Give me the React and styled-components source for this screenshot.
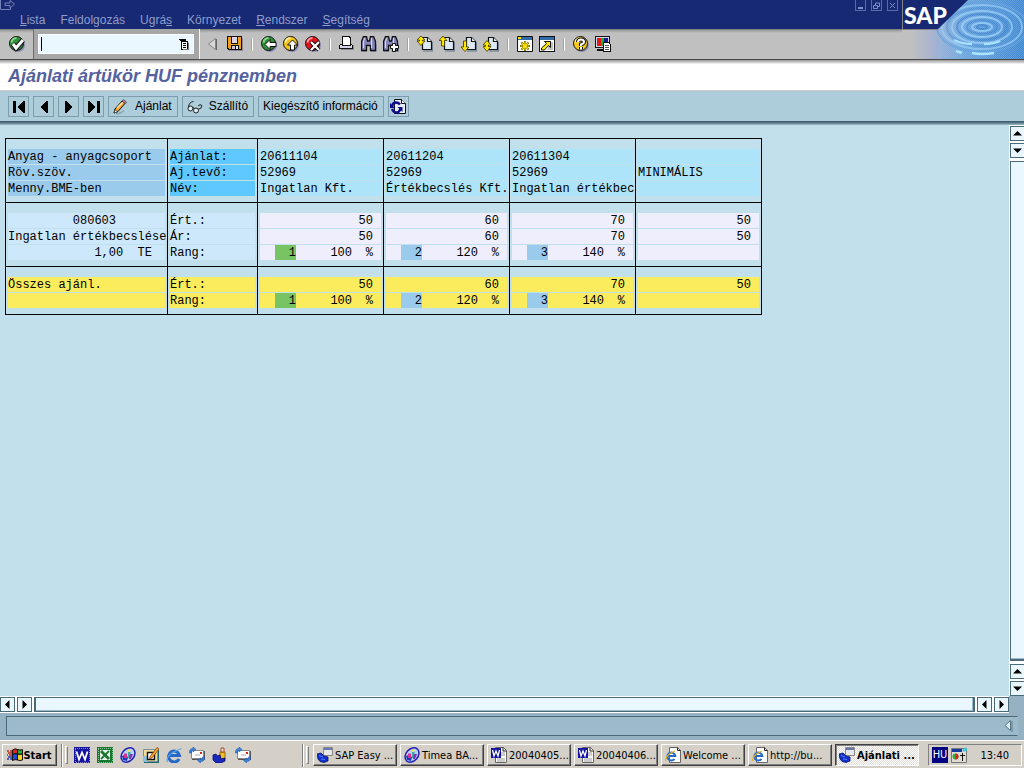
import React, { useState } from "react";
import styled, { createGlobalStyle, css } from "styled-components";

const GlobalStyle = createGlobalStyle`
  * {
    box-sizing: border-box;
  }
  body {
    margin: 0;
    font-family: "Liberation Sans", Arial, sans-serif;
    font-size: 12px;
    color: #000;
  }
  button {
    font: inherit;
    color: inherit;
    border: 0;
    padding: 0;
    background: none;
  }
  svg {
    display: block;
    flex-shrink: 0;
  }
`;

const Screen = styled.div`
  display: flex;
  flex-direction: column;
  min-height: 100vh;
  background: #c2dfec;
`;

/* header */

const Header = styled.header`
  display: grid;
  grid-template-columns: 1fr 122px;
  border-bottom: 1px solid #484848;
  background: #c0c0c0;
`;

const TopBar = styled.div`
  height: 29px;
  background: #172973;
  color: #8f9dcb;
`;

const TitleStrip = styled.div`
  display: flex;
  justify-content: space-between;
  height: 11px;
`;

const WindowButtons = styled.div`
  display: flex;
  gap: 5px;
  padding-right: 4px;
`;

const WindowButton = styled.button`
  width: 11px;
  height: 11px;
  border: 1px solid #5a6aa8;
  border-top: 0;
`;

const Menu = styled.nav`
  display: flex;
  gap: 15px;
  padding-left: 20px;
`;

const MenuItem = styled.button`
  line-height: 18px;
`;

const Toolbar = styled.div`
  display: flex;
  align-items: center;
  height: 30px;
  padding-left: 9px;
  background: linear-gradient(#777 0, #aaa 2px, #c0c0c0 4px, #c0c0c0 100%);
`;

const IconButton = styled.button`
  width: 16px;
  height: 16px;
`;

const CommandBox = styled.div`
  display: flex;
  align-items: center;
  height: 30px;
  margin-left: 8px;
  padding: 0 5px 0 4px;
  background: #a6a6a6;
  border-left: 1px solid #6c6c6c;
  border-right: 1px solid #f4f4f4;
`;

const CommandField = styled.div`
  display: flex;
  align-items: center;
  width: 156px;
  height: 20px;
  padding-right: 3px;
  background: #ebf7ff;
  border: 1px solid #fff;
`;

const CommandInput = styled.input`
  flex: 1;
  min-width: 0;
  height: 14px;
  margin-left: 2px;
  padding: 0 2px;
  font: inherit;
  background: transparent;
  border: 0;
  border-left: 1px solid #000;
  outline: none;
`;

const ToolGroup = styled.div`
  display: flex;
  align-items: center;
  gap: 6px;
  padding-left: 5px;
`;

const Separator = styled.span`
  width: 2px;
  height: 13px;
  margin: 0 2px;
  border-left: 1px solid #a2a2a2;
  border-right: 1px solid #fff;
`;

const LogoPanel = styled.div`
  grid-column: 2;
  grid-row: 1 / span 2;
`;

const TitleBar = styled.div`
  height: 31px;
  padding: 4px 8px 0;
  background: linear-gradient(#9a9a9a 0, #dcdcdc 3px, #fff 4px, #fff 100%);
  border-bottom: 1px solid #c9c9c9;
`;

const Title = styled.h1`
  margin: 0;
  font-size: 18px;
  line-height: 24px;
  font-style: italic;
  font-weight: bold;
  color: #5462a0;
`;

const AppBar = styled.div`
  display: flex;
  align-items: center;
  gap: 4px;
  height: 34px;
  padding: 0 8px 3px;
  background: linear-gradient(
    #adcddb 0,
    #adcddb 30px,
    #34515f 30px,
    #5f7f8e 32px,
    #9fbccb 34px
  );
`;

const AppButton = styled.button`
  display: flex;
  align-items: center;
  justify-content: center;
  gap: 6px;
  min-width: 21px;
  height: 21px;
  padding: 0 ${(p) => (p.$label ? "5px 0 4px" : "0")};
  border: 1px solid #7d9dac;
  line-height: 19px;
`;

/* work area */

const Work = styled.main`
  display: grid;
  grid-template-columns: 1fr 15px;
  flex: 1;
`;

const ListArea = styled.div`
  padding: 13px 0 0 5px;
`;

const Offers = styled.table`
  border-collapse: collapse;
  font-family: "Liberation Mono", "Courier New", monospace;
  font-size: 12px;
  line-height: 17px;
  table-layout: fixed;
  width: 757px;

  td,
  th {
    padding: 10px 2px 5px;
    border: 1px solid #000;
    font-weight: normal;
    text-align: left;
    vertical-align: top;
  }
`;

const tones = {
  material: "#9acbec",
  caption: "#5fc9ff",
  bidder: "#aee4fa",
  item: "#cde8fb",
  value: "#eeeefc",
  total: "#faec5c",
};

const Line = styled.div`
  height: 15px;
  margin-bottom: 1px;
  padding-right: ${(p) => (p.$right ? "8px" : "0")};
  background: ${(p) => tones[p.$tone]};
  text-align: ${(p) => (p.$right ? "right" : "left")};
  white-space: pre;
`;

const RankLine = styled(Line)`
  display: grid;
  grid-template-columns: 15px 21px 56px 21px;
  text-align: right;
`;

const Rank = styled.span`
  grid-column: 2;
  height: 15px;
  background: ${(p) => (p.$best ? "#78c465" : "#9acbec")};
`;

const VScroll = styled.div`
  display: flex;
  flex-direction: column;
  gap: 2px;
  padding: 1px 0 0 1px;
  background: #fff;
`;

const HScroll = styled.div`
  display: flex;
  gap: 2px;
  height: 17px;
  margin-right: 15px;
  padding: 1px 0;
  background: #fff;
`;

const ScrollButton = styled.button`
  display: flex;
  align-items: center;
  justify-content: center;
  width: 15px;
  height: 15px;
  background: #ebf7ff;
  border: 1px solid #4a6979;
  flex-shrink: 0;
`;

const Thumb = styled.div`
  flex: 1;
  background: #ebf7ff;
  border: 1px solid #4a6979;
  ${(p) =>
    p.$vertical
      ? css`
          border-bottom-width: 2px;
          margin: 1px 0;
          width: 15px;
          box-shadow: inset 0 -1px #9cbac9;
        `
      : css`
          border-left-width: 2px;
          border-right-width: 2px;
          box-shadow: inset -1px -1px #9cbac9;
        `}
`;

const ScrollRow = styled.div`
  background: #95b1c2;
`;

const StatusBar = styled.footer`
  height: 27px;
  padding: 3px 6px 4px;
  background: #95b1c2;
`;

const StatusField = styled.div`
  display: flex;
  align-items: center;
  justify-content: flex-end;
  height: 20px;
  padding-right: 4px;
  background: #9cbaca;
  border: 1px solid #49697a;
  border-right-color: #9cbaca;
`;

/* taskbar */

const Taskbar = styled.div`
  display: flex;
  align-items: center;
  height: 28px;
  padding: 1px 2px 0;
  background: #d4d0c8;
  border-top: 1px solid #fff;
  font-family: "DejaVu Sans Condensed", Tahoma, sans-serif;
  font-size: 11px;
`;

const raised = css`
  border: 1px solid;
  border-color: #fff #404040 #404040 #fff;
  box-shadow: inset -1px -1px #808080;
`;

const StartButton = styled.button`
  ${raised}
  display: flex;
  align-items: center;
  justify-content: center;
  width: 55px;
  height: 22px;
  font-weight: bold;
`;

const Divider = styled.span`
  width: 2px;
  height: 23px;
  margin-left: ${(p) => (p.$wide ? "51px" : "4px")};
  border-left: 1px solid #808080;
  border-right: 1px solid #fff;
`;

const Grip = styled.span`
  width: 3px;
  height: 18px;
  margin-left: 2px;
  border: 1px solid;
  border-color: #fff #808080 #808080 #fff;
`;

const QuickLaunch = styled.div`
  display: flex;
  gap: 7px;
  padding-left: 6px;
`;

const Tasks = styled.div`
  display: flex;
  flex: 1;
  gap: 3px;
  padding: 0 9px 0 4px;
  min-width: 0;
`;

const Task = styled.button`
  ${raised}
  display: flex;
  align-items: center;
  flex: 1 1 0;
  gap: 2px;
  min-width: 0;
  height: 22px;
  padding-left: 3px;
  overflow: hidden;
  white-space: nowrap;
  ${(p) =>
    p.$active &&
    css`
      font-weight: bold;
      background: repeating-conic-gradient(#fff 0 25%, #dedbd5 0 50%) 0 0 / 2px
        2px;
      border-color: #404040 #fff #fff #404040;
      box-shadow: inset 1px 1px #808080;
    `}
`;

const Tray = styled.div`
  display: flex;
  align-items: center;
  gap: 3px;
  width: 94px;
  height: 22px;
  padding: 0 12px 0 3px;
  border: 1px solid;
  border-color: #808080 #fff #fff #808080;
`;

const Language = styled.span`
  width: 16px;
  height: 16px;
  background: #000080;
  color: #fff;
  line-height: 16px;
  text-align: center;
`;

const Clock = styled.time`
  margin-left: auto;
`;

/* icons */

const Icon = ({ children, size = 16, ...rest }) => (
  <svg
    width={size}
    height={size}
    viewBox={`0 0 ${size} ${size}`}
    fill="none"
    aria-hidden="true"
    {...rest}
  >
    {children}
  </svg>
);

const Disc = ({ fill, shine, children }) => (
  <Icon>
    <circle cx="9" cy="9" r="7" fill="#8a8ab8" />
    <circle cx="7.5" cy="7.5" r="7" fill={fill} stroke="#111" />
    <path d="M2.500 6.500a5 5 0 0 1 5-4.500" stroke={shine} strokeWidth="2" />
    {children}
  </Icon>
);

const EnterIcon = () => (
  <Disc fill="#2f8f38" shine="#8cd88c">
    <path d="M4 8l3 4 7-8" stroke="#111" strokeWidth="5" />
    <path d="M4 8l3 4 7-8" stroke="#fff" strokeWidth="3" />
  </Disc>
);

const BackIcon = () => (
  <Disc fill="#2f8f38" shine="#8cd88c">
    <path d="M4 8.500l5-5v3h6v4H9v3z" fill="#fff" stroke="#111" />
  </Disc>
);

const ExitIcon = () => (
  <Disc fill="#f2c417" shine="#fff3a0">
    <path d="M9.500 4l5 5h-3v5h-4V9h-3z" fill="#fff" stroke="#111" />
  </Disc>
);

const CancelIcon = () => (
  <Disc fill="#e3121c" shine="#ff9c9c">
    <path d="M6 6l8 8M14 6l-8 8" stroke="#111" strokeWidth="4" />
    <path d="M6 6l8 8M14 6l-8 8" stroke="#fff" strokeWidth="2.200" />
  </Disc>
);

const ListIcon = () => (
  <Icon size={11} shapeRendering="crispEdges">
    <path d="M2 2h7v9H2z" fill="#000" />
    <path d="M3 3h5v7H3z" fill="#fff" />
    <path d="M0 0h7v2H4v1H2V2H1V1H0z" fill="#000" />
    <path d="M4 4h3v1H4zM4 6h3v1H4zM4 8h3v1H4z" fill="#000" />
    <path d="M9 4h1v7H4v-1h5z" fill="#777" />
  </Icon>
);

const LeftTriangle = () => (
  <Icon>
    <path d="M10.500 2.500v11L3.500 8z" fill="#d8d8d8" stroke="#858585" />
    <path d="M11.500 3v11" stroke="#666" />
  </Icon>
);

const SaveIcon = () => (
  <Icon shapeRendering="crispEdges">
    <path d="M2 2h14v13H2z" fill="#8a8a9a" />
    <path d="M0 0h15v14H1L0 13z" fill="#111" />
    <path d="M1 1h3v7h7V1h3v12h-2v-4H4v4H2L1 12z" fill="#f0a020" />
    <path d="M5 1h5v6H5z" fill="#dcd4ec" />
    <path d="M5 10h3v3H5z" fill="#c8c8d8" />
    <path d="M9 10h2v3H9z" fill="#f4f4fa" />
  </Icon>
);

const PrintIcon = () => (
  <Icon shapeRendering="crispEdges">
    <path d="M2 14h13V9h-1v4H2z" fill="#8a8a9a" />
    <path d="M3 0h8v1h1v7h1v1h1v4H0V9h1V8h2z" fill="#111" />
    <path d="M4 1h6v1h1v7H4z" fill="#fff" />
    <path d="M1 9h2v1h9V9h1v1H1z" fill="#e8e8f4" />
    <path d="M1 10h12v2H1z" fill="#d4d4e6" />
  </Icon>
);

const FindIcon = ({ more }) => (
  <Icon>
    <path d="M1 15.500h5M10 15.500h5.500V8" stroke="#9c9ca8" />
    <path
      d="M2.500 .5h3l1 4.500h2l1-4.500h3l2 5v9h-5v-5h-4v5h-5v-9z"
      fill="#8487b8"
      stroke="#111"
      strokeWidth="1.300"
    />
    <path d="M3.500 2L2.500 6v6M10.500 2v10" stroke="#d5d8f0" />
    {more && (
      <path
        d="M9.500 9.500v-2h3v2h3v3h-3v3h-3v-3h-2v-3z"
        fill="#fff"
        stroke="#111"
      />
    )}
  </Icon>
);

const pageArrows = {
  first: "M4 0l4 4H5.500v1H8L4 9.500 0 5h2.500V4H0z",
  prev: "M4 0l4 4.500H5.500V10h-3V4.500H0z",
  next: "M4 15.500l4-4.500H5.500V5h-3v6H0z",
  last: "M4 4.500l4 4.500H5.500v1.500H8L4 15.500 0 10.500h2.500V9H0z",
};

const PageIcon = ({ kind }) => (
  <Icon>
    <path d="M6 15h9.500V6" stroke="#7c8c9a" strokeWidth="1.500" />
    <path
      d="M5.500 13.500v-12h5l4 4v8z"
      fill="#dce9f4"
      stroke="#111"
      strokeWidth="1.200"
    />
    <path d="M10.500 1.500v4h4" fill="#fff" stroke="#111" strokeWidth="1.200" />
    <path
      d={pageArrows[kind]}
      fill="#ffe600"
      stroke="#3c3600"
      strokeWidth=".8"
    />
  </Icon>
);

const SessionIcon = () => (
  <Icon>
    <path d="M.5 .5h15v15H.5z" fill="#fff" stroke="#111" />
    <path d="M1 1h14v3H1z" fill="#336aa8" />
    <path d="M1 1h3v2H1z" fill="#ffe600" />
    <path
      d="M8 5v10M3 10h10M4.500 6.500l7 7M11.500 6.500l-7 7"
      stroke="#5c5200"
      strokeWidth="2"
    />
    <path
      d="M8 5.500v9M3.500 10h9M5 7l6 6M11 7l-6 6"
      stroke="#ffe600"
      strokeWidth="1.200"
    />
  </Icon>
);

const ShortcutIcon = () => (
  <Icon shapeRendering="crispEdges">
    <path d="M.5 .5h15v15H.5z" fill="#fff" stroke="#111" />
    <path d="M1 1h14v3H1z" fill="#336aa8" />
    <path d="M11 6h3v8H8z" fill="#c4c4c4" />
    <path
      d="M5.500 5.500h6v6l-2-2-4 4.500h-3v-2L7.500 7.500z"
      fill="#ffe600"
      stroke="#111"
      shapeRendering="auto"
    />
  </Icon>
);

const HelpIcon = () => (
  <Disc fill="#f6c81c" shine="#fff3a0">
    <path
      d="M5 6q0-2.500 3-2.500T11 6q0 1.500-3 2.500v1.500M8 11v2.500"
      stroke="#111"
      strokeWidth="4"
    />
    <path
      d="M5 6q0-2.500 3-2.500T11 6q0 1.500-3 2.500v1.500M8 11v2.500"
      stroke="#fff"
      strokeWidth="2"
    />
  </Disc>
);

const LayoutIcon = () => (
  <Icon shapeRendering="crispEdges">
    <path d="M.5 .5h14v11H.5z" fill="#d8d8e8" stroke="#111" />
    <path d="M2 2h4v8H2z" fill="#e01818" />
    <path d="M6 2h3v8H6z" fill="#18b030" />
    <path d="M9 2h4v8H9z" fill="#181890" />
    <path d="M2 13h7v2H2z" fill="#111" />
    <path d="M8.500 6.500h5l2 2v7h-7z" fill="#fff" stroke="#111" />
    <path d="M10 9h4M10 11h4M10 13h4" stroke="#555" />
  </Icon>
);

const NavIcon = ({ back, edge }) => (
  <Icon
    shapeRendering="crispEdges"
    style={{ transform: back ? "none" : "scaleX(-1)" }}
  >
    {edge && <path d="M2 2h3v12H2z" fill="#000" />}
    <path
      d={edge ? "M14 2v12h-1L6 8l7-6z" : "M12 2v12h-1L4 8l7-6z"}
      fill="#000"
    />
  </Icon>
);

const PencilIcon = () => (
  <Icon>
    <path d="M3 14.500q4 1 8-3" stroke="#8ba6b5" strokeWidth="1.500" />
    <path d="M1 14l1-4 7-8 3 2.500-7 8z" fill="#f3a235" stroke="#111" />
    <path d="M4 9l6-6" stroke="#ffe6a0" strokeWidth="1.500" />
    <path d="M1 14l1-3.500L4.500 13z" fill="#fff" stroke="#111" strokeWidth=".6" />
    <path
      d="M9 2l1.500-1.300 3 2.500L12 4.700z"
      fill="#e77c8f"
      stroke="#111"
      strokeWidth=".6"
    />
  </Icon>
);

const GlassesIcon = () => (
  <Icon stroke="#222">
    <circle cx="3.5" cy="9.500" r="2.500" fill="#dceaf2" />
    <circle cx="9" cy="11.500" r="2.500" fill="#dceaf2" />
    <path d="M5.500 9q2-1 2 1M1.500 8Q2 3 6.500 2.500M11 10.500q4-1 4-4-2-2-4 .5" />
  </Icon>
);

const RefreshIcon = () => (
  <Icon>
    <path d="M4.500 14.500V.5h7l4 4v10z" fill="#e8f0f6" stroke="#111" />
    <path d="M11.500 .5v4h4" fill="#fff" stroke="#111" />
    <path
      d="M10 5.500Q8.500 3.500 6 3.500 3 3.500 2 7M2 10q1.500 3.500 4.500 3.500 2.500 0 4-3.500"
      stroke="#0c0c8c"
      strokeWidth="2.400"
    />
    <path d="M0 4v5h5zM12.500 13V8h-5z" fill="#0c0c8c" />
  </Icon>
);

const CommandGlyph = () => (
  <svg width="16" height="11" viewBox="0 0 16 11" fill="none" aria-hidden="true">
    <path d="M.5 0v9.500h10V7M5 5.500h5V8l4.500-4L10 .5V3H5z" stroke="#7282b8" />
  </svg>
);

const rotations = { up: 0, right: 90, down: 180, left: 270 };

const ScrollArrow = ({ dir }) => (
  <Icon size={9}>
    <path
      d="M0 6.500h9L4.500 2z"
      fill="#000"
      transform={`rotate(${rotations[dir]} 4.500 4.500)`}
    />
  </Icon>
);

const WindowsIcon = () => (
  <Icon>
    <path
      d="M5.500 3q2.500-2 5-.5V7q-2.500-1-5 .5z"
      fill="#e02818"
      stroke="#111"
    />
    <path
      d="M10.500 2.500q2.500 1 5 0V7q-2.500 1-5 0z"
      fill="#28a838"
      stroke="#111"
    />
    <path
      d="M5.500 7.500q2.500-1.500 5-.5v6q-2.500-1-5 .5z"
      fill="#2848d8"
      stroke="#111"
    />
    <path
      d="M10.500 7q2.500 1 5 0v6q-2.500 1-5 0z"
      fill="#f8d820"
      stroke="#111"
    />
    <path d="M0 4h2M3 4h2M1 6h4M0 8h1M2 8h3" stroke="#c02818" strokeWidth="1.400" />
    <path d="M1 10h4M0 12h2M3 12h2" stroke="#2838a8" strokeWidth="1.400" />
  </Icon>
);

const WordMark = () => (
  <Icon>
    <path d="M0 0h16v16H0z" fill="#1414a0" />
    <path
      d="M1 1h14v14H1z"
      stroke="#8c8cd8"
      strokeDasharray="1 1"
      shapeRendering="crispEdges"
    />
    <path d="M2.500 4.500l2.500 8 3-7 3 7 2.500-8" stroke="#fff" strokeWidth="1.800" />
  </Icon>
);

const ExcelMark = () => (
  <Icon>
    <path d="M0 0h16v16H0z" fill="#187830" />
    <path
      d="M1 1h14v14H1z"
      stroke="#8cc49a"
      strokeDasharray="1 1"
      shapeRendering="crispEdges"
    />
    <path d="M3 3h10v10H3z" fill="#eef8ee" />
    <path d="M4 4l8 8" stroke="#187830" strokeWidth="2.800" />
    <path d="M12 4l-8 8" stroke="#187830" strokeWidth="1.800" />
  </Icon>
);

const LotusIcon = () => (
  <Icon>
    <ellipse
      cx="8"
      cy="8"
      rx="8"
      ry="6"
      transform="rotate(-48 8 8)"
      fill="#b8d4f4"
      stroke="#2020b8"
      strokeWidth="1.500"
    />
    <path d="M2 9q3-2 6 1l-1 4-4-1z" fill="#2038b8" />
    <path d="M4 6.500h3V11H4z" fill="#d83098" />
    <path d="M8 5h2.500v6H8z" fill="#38a8a0" />
    <path d="M10 7h3l-2 5H9z" fill="#8030b8" />
    <circle cx="9" cy="3.500" r="1.300" fill="#f8e040" />
  </Icon>
);

const NotepadIcon = () => (
  <Icon>
    <path d="M1 3h15v13H1z" fill="#206870" />
    <path d="M.5 2.500h14v12H.5z" fill="#f0dc9c" stroke="#7890a0" />
    <path d="M0 9h5v6H0z" fill="#88c0d8" />
    <path d="M4.500 5.500h7v7h-7z" fill="#fff" stroke="#111" strokeWidth="1.400" />
    <path
      d="M7 9.500L14 .5l2 1.500-7 9-2.500.5z"
      fill="#f0a828"
      stroke="#803818"
      strokeWidth=".7"
    />
  </Icon>
);

const ExplorerIcon = ({ page }) => (
  <Icon>
    {page && (
      <g>
        <path d="M4.500 15.500V.5h8l3 3v12z" fill="#fff" stroke="#666" />
        <path d="M12.500 .5v3h3" stroke="#222" />
      </g>
    )}
    <path
      d={page ? "M9.500 12a4 4 0 1 1 .8-3H3" : "M13 12a5.500 5.500 0 1 1 .5-3.500H4"}
      stroke="#2468c8"
      strokeWidth={page ? "2" : "3"}
    />
    <path
      d={page ? "M1 14Q-1 9 10 4" : "M1.500 15Q-1.500 8 15.500 1.500"}
      stroke={page ? "#e8b818" : "#58a8e8"}
      strokeWidth="1.300"
    />
  </Icon>
);

const MailIcon = () => (
  <Icon>
    <path d="M3 4h13v9H3z" fill="#555" />
    <path d="M2.500 3.500h12v8h-12z" fill="#fff" stroke="#888" />
    <path d="M11 5h2v2h-2z" fill="#d82020" />
    <path d="M6 8h5" stroke="#aaa" />
    <path
      d="M.5 6Q0 1.500 4 1.500V0l3 2.500L4 5V3.500Q2 3.500 2.500 6z"
      fill="#3888e0"
      stroke="#1848a0"
      strokeWidth=".5"
    />
    <path
      d="M15.500 10q.5 4.500-4 4.500V16l-3-2.500 3-2.500v1.500q2.500 0 2-2.500z"
      fill="#3888e0"
      stroke="#1848a0"
      strokeWidth=".5"
    />
  </Icon>
);

const CleanerIcon = () => (
  <Icon>
    <path d="M8 5h5v7H8z" fill="#f0c020" stroke="#805008" strokeWidth=".8" />
    <path d="M9 1h3v4H9z" fill="#e8e0c0" stroke="#a02818" strokeWidth=".8" />
    <path
      d="M1 8l3-1 1 2 3-1 1 4 4-1v3l-4 2H4l-3-3z"
      fill="#1828c0"
      stroke="#081060"
      strokeWidth=".8"
    />
  </Icon>
);

const SapTaskIcon = () => (
  <Icon>
    <path d="M6.500 .5h9v8h-9z" fill="#e8e8e8" stroke="#888" />
    <path d="M7 1h8v2H7z" fill="#6878b0" />
    <path
      d="M0 7l4-1 3 3 4 1v4l-4 1.500-4-1L1 12z"
      fill="#1030d0"
      stroke="#081060"
      strokeWidth=".8"
    />
    <path d="M2 8.500l4 1.500M4 12l4 .5" stroke="#5880f0" />
  </Icon>
);

const WordDocIcon = () => (
  <Icon>
    <path d="M4.500 15.500V.5h8l3 3v12z" fill="#fff" stroke="#666" />
    <path d="M12 .5v3.500h3.500" stroke="#222" />
    <path d="M10 6h4M10 8h4M6 12h8M6 14h8" stroke="#999" />
    <path d="M0 1h10v10H0z" fill="#1414a0" />
    <path d="M1.500 3l1.500 6 2-5 2 5 1.500-6" stroke="#fff" strokeWidth="1.300" />
  </Icon>
);

const TrayIcon = () => (
  <Icon>
    <path d="M.5 1.500h15v14H.5z" fill="#e0dcd4" stroke="#777" />
    <path d="M1 2h10v3H1z" fill="#1838a0" />
    <path d="M11 3l4-3 1 3-3 2z" fill="#38d0e0" />
    <circle cx="4.500" cy="9.500" r="3" fill="#28b038" />
    <path d="M4.500 9.500V6.500a3 3 0 0 1 0 6z" fill="#e02020" />
    <path d="M11.500 6v8M9 8.500h5" stroke="#111" />
  </Icon>
);

const ripples = [
  [5, 2, "#2f76c4"],
  [10, 4, "#9ed8ff"],
  [15, 7, "#3d84d0"],
  [20, 10, "#a4dcff"],
  [25, 13, "#3b80cc"],
  [30, 16, "#9cd6fc"],
  [35, 19, "#4b90d6"],
  [40, 22, "#98d0f8"],
  [45, 25, "#5c9edc"],
];

const Logo = () => (
  <svg width="122" height="59" viewBox="0 0 122 59" role="img" aria-label="SAP">
    <defs>
      <linearGradient id="water">
        <stop offset="0.08" stopColor="#c0c0c0" />
        <stop offset="0.24" stopColor="#abb4d0" />
        <stop offset="0.5" stopColor="#6fa6dc" />
        <stop offset="1" stopColor="#3f86cf" />
      </linearGradient>
      <pattern id="grain" width="2" height="2" patternUnits="userSpaceOnUse">
        <path d="M0 0h1v1H0zM1 1h1v1H1z" fill="#9cc8f4" />
      </pattern>
    </defs>
    <rect width="122" height="59" fill="url(#water)" />
    <g fill="none">
      {ripples.map(([rx, ry, color]) => (
        <ellipse
          key={rx}
          cx="80"
          cy="27"
          rx={rx}
          ry={ry}
          stroke={color}
          strokeWidth="2"
          opacity="0.7"
        />
      ))}
      <path
        d="M52 40q8 4 18 4M82 44q10 0 16-3M54 51l6 2M70 53q10 2 22 0"
        stroke="#aee8ff"
        strokeWidth="2.500"
      />
    </g>
    <rect x="36" width="86" height="59" fill="url(#grain)" opacity="0.3" />
    <path d="M0 0h66L36 29H0z" fill="#172973" />
    <path d="M.5 0v29.500H36" fill="none" stroke="#858585" />
    <text
      x="2"
      y="24"
      fill="#fff"
      fontFamily="Lato, sans-serif"
      fontWeight="900"
      fontSize="23"
    >
      SAP
    </text>
  </svg>
);

const columns = [162, 90, 126, 126, 126, 126];

const bidders = [
  { id: "20611104", vendor: "52969", name: "Ingatlan Kft.", sum: "50", rank: 1, pct: "100" },
  { id: "20611204", vendor: "52969", name: "Értékbecslés Kft.", sum: "60", rank: 2, pct: "120" },
  { id: "20611304", vendor: "52969", name: "Ingatlan értékbec", sum: "70", rank: 3, pct: "140" },
];

const RankRow = ({ bidder, tone }) => (
  <RankLine $tone={tone}>
    <Rank $best={bidder.rank === 1}>{bidder.rank}</Rank>
    <span>{bidder.pct}</span>
    <span>%</span>
  </RankLine>
);

const Lines = ({ tone, right, items }) =>
  items.map((text, i) => (
    <Line key={i} $tone={tone} $right={right}>
      {text}
    </Line>
  ));

const OfferTable = () => (
  <Offers>
    <colgroup>
      {columns.map((width, i) => (
        <col key={i} width={width} />
      ))}
    </colgroup>
    <thead>
      <tr>
        <th>
          <Lines
            tone="material"
            items={["Anyag - anyagcsoport", "Röv.szöv.", "Menny.BME-ben"]}
          />
        </th>
        <th>
          <Lines tone="caption" items={["Ajánlat:", "Aj.tevő:", "Név:"]} />
        </th>
        {bidders.map((b) => (
          <th key={b.id}>
            <Lines tone="bidder" items={[b.id, b.vendor, b.name]} />
          </th>
        ))}
        <th>
          <Lines tone="bidder" items={["", "MINIMÁLIS", ""]} />
        </th>
      </tr>
    </thead>
    <tbody>
      <tr>
        <td>
          <Lines
            tone="item"
            items={["         080603", "Ingatlan értékbecslése", "            1,00  TE"]}
          />
        </td>
        <td>
          <Lines tone="item" items={["Ért.:", "Ár:", "Rang:"]} />
        </td>
        {bidders.map((b) => (
          <td key={b.id}>
            <Lines tone="value" right items={[b.sum, b.sum]} />
            <RankRow bidder={b} tone="value" />
          </td>
        ))}
        <td>
          <Lines tone="value" right items={["50", "50", ""]} />
        </td>
      </tr>
      <tr>
        <td>
          <Lines tone="total" items={["Összes ajánl.", ""]} />
        </td>
        <td>
          <Lines tone="total" items={["Ért.:", "Rang:"]} />
        </td>
        {bidders.map((b) => (
          <td key={b.id}>
            <Lines tone="total" right items={[b.sum]} />
            <RankRow bidder={b} tone="total" />
          </td>
        ))}
        <td>
          <Lines tone="total" right items={["50", ""]} />
        </td>
      </tr>
    </tbody>
  </Offers>
);

const toolGroups = [
  [
    ["Vissza", <LeftTriangle />],
    ["Mentés", <SaveIcon />],
  ],
  [
    ["Előző", <BackIcon />],
    ["Kilépés", <ExitIcon />],
    ["Mégse", <CancelIcon />],
  ],
  [
    ["Nyomtatás", <PrintIcon />],
    ["Keresés", <FindIcon />],
    ["Tovább keres", <FindIcon more />],
  ],
  [
    ["Első oldal", <PageIcon kind="first" />],
    ["Előző oldal", <PageIcon kind="prev" />],
    ["Következő oldal", <PageIcon kind="next" />],
    ["Utolsó oldal", <PageIcon kind="last" />],
  ],
  [
    ["Új mód", <SessionIcon />],
    ["Parancsikon", <ShortcutIcon />],
  ],
  [
    ["Súgó", <HelpIcon />],
    ["Elrendezés", <LayoutIcon />],
  ],
];

const quickIcons = [
  ["Word", <WordMark />],
  ["Excel", <ExcelMark />],
  ["Notes", <LotusIcon />],
  ["Asztal", <NotepadIcon />],
  ["Explorer", <ExplorerIcon />],
  ["Outlook", <MailIcon />],
  ["SAP Logon", <CleanerIcon />],
  ["Levelek", <MailIcon />],
];

const tasks = [
  ["SAP Easy ...", <SapTaskIcon />],
  ["Timea BA...", <LotusIcon />],
  ["20040405...", <WordDocIcon />],
  ["20040406...", <WordDocIcon />],
  ["Welcome ...", <ExplorerIcon page />],
  ["http://bu...", <ExplorerIcon page />],
  ["Ajánlati ...", <SapTaskIcon />],
];

const App = () => {
  const [command, setCommand] = useState("");
  const [activeTask, setActiveTask] = useState(6);

  return (
    <Screen>
      <GlobalStyle />
      <Header>
        <TopBar>
          <TitleStrip>
            <CommandGlyph />
            <WindowButtons>
              <WindowButton aria-label="Kis méret">
                <Icon size={9}>
                  <path d="M2 7h5" stroke="#7f8dc4" strokeWidth="2" />
                </Icon>
              </WindowButton>
              <WindowButton aria-label="Előző méret">
                <Icon size={9}>
                  <path
                    d="M3.500 4V2h4v3.500H6M1.500 4.500h4v3h-4z"
                    stroke="#7f8dc4"
                  />
                </Icon>
              </WindowButton>
              <WindowButton aria-label="Bezárás">
                <Icon size={9}>
                  <path d="M2 2l5 5M7 2L2 7" stroke="#7f8dc4" />
                </Icon>
              </WindowButton>
            </WindowButtons>
          </TitleStrip>
          <Menu>
            <MenuItem><u>L</u>ista</MenuItem>
            <MenuItem>Feldolgozás</MenuItem>
            <MenuItem>Ugrá<u>s</u></MenuItem>
            <MenuItem>Környezet</MenuItem>
            <MenuItem><u>R</u>endszer</MenuItem>
            <MenuItem><u>S</u>egítség</MenuItem>
          </Menu>
        </TopBar>
        <Toolbar>
          <IconButton aria-label="Enter">
            <EnterIcon />
          </IconButton>
          <CommandBox>
            <CommandField>
              <CommandInput
                aria-label="Parancs"
                value={command}
                onChange={(e) => setCommand(e.target.value)}
              />
              <ListIcon />
            </CommandField>
          </CommandBox>
          <ToolGroup>
            {toolGroups.map((group, i) => (
              <React.Fragment key={i}>
                {i > 0 && <Separator />}
                {group.map(([label, icon]) => (
                  <IconButton key={label} aria-label={label}>
                    {icon}
                  </IconButton>
                ))}
              </React.Fragment>
            ))}
          </ToolGroup>
        </Toolbar>
        <LogoPanel>
          <Logo />
        </LogoPanel>
      </Header>
      <TitleBar>
        <Title>Ajánlati ártükör HUF pénznemben</Title>
      </TitleBar>
      <AppBar>
        <AppButton aria-label="Első oszlop"><NavIcon back edge /></AppButton>
        <AppButton aria-label="Előző oszlop"><NavIcon back /></AppButton>
        <AppButton aria-label="Következő oszlop"><NavIcon /></AppButton>
        <AppButton aria-label="Utolsó oszlop"><NavIcon edge /></AppButton>
        <AppButton $label><PencilIcon />Ajánlat</AppButton>
        <AppButton $label><GlassesIcon />Szállító</AppButton>
        <AppButton $label>Kiegészítő információ</AppButton>
        <AppButton aria-label="Frissítés"><RefreshIcon /></AppButton>
      </AppBar>
      <Work>
        <ListArea>
          <OfferTable />
        </ListArea>
        <VScroll>
          <ScrollButton aria-label="Fel"><ScrollArrow dir="up" /></ScrollButton>
          <ScrollButton aria-label="Le"><ScrollArrow dir="down" /></ScrollButton>
          <Thumb $vertical />
          <ScrollButton aria-label="Fel"><ScrollArrow dir="up" /></ScrollButton>
          <ScrollButton aria-label="Le"><ScrollArrow dir="down" /></ScrollButton>
        </VScroll>
      </Work>
      <ScrollRow>
        <HScroll>
          <ScrollButton aria-label="Balra"><ScrollArrow dir="left" /></ScrollButton>
          <ScrollButton aria-label="Jobbra"><ScrollArrow dir="right" /></ScrollButton>
          <Thumb />
          <ScrollButton aria-label="Balra"><ScrollArrow dir="left" /></ScrollButton>
          <ScrollButton aria-label="Jobbra"><ScrollArrow dir="right" /></ScrollButton>
        </HScroll>
      </ScrollRow>
      <StatusBar>
        <StatusField>
          <svg width="9" height="14" viewBox="0 0 9 14" aria-hidden="true">
            <path d="M6.500 1.500v10L1 6.500z" fill="#dcebf2" stroke="#5b7887" />
            <path d="M8 2v11" stroke="#5b7887" />
          </svg>
        </StatusField>
      </StatusBar>
      <Taskbar>
        <StartButton><WindowsIcon />Start</StartButton>
        <Divider />
        <Grip />
        <QuickLaunch>
          {quickIcons.map(([label, icon]) => (
            <IconButton key={label} aria-label={label}>
              {icon}
            </IconButton>
          ))}
        </QuickLaunch>
        <Divider $wide />
        <Grip />
        <Tasks>
          {tasks.map(([label, icon], i) => (
            <Task
              key={label}
              $active={i === activeTask}
              onClick={() => setActiveTask(i)}
            >
              {icon}
              {label}
            </Task>
          ))}
        </Tasks>
        <Tray>
          <Language>HU</Language>
          <TrayIcon />
          <Clock>13:40</Clock>
        </Tray>
      </Taskbar>
    </Screen>
  );
};

export default App;
